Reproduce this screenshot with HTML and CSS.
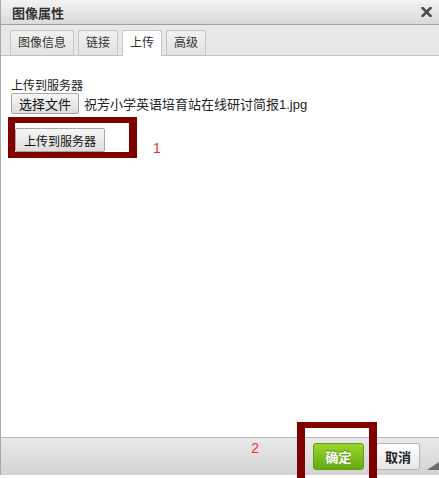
FILE: index.html
```html
<!DOCTYPE html>
<html lang="zh-CN">

<head>
    <meta charset="UTF-8">
    <meta name="viewport" content="width=device-width, initial-scale=1.0">
    <title>图像属性</title>
    <link rel="stylesheet" href="styles.css">
</head>

<body>
    <div class="dialog">
        <!-- 标题栏 -->
        <div class="title-bar">
            <span class="title">图像属性</span>
            <span class="close">
                <svg width="11" height="10" viewBox="0 0 11 10">
                    <path d="M1.5 1 L9.5 9 M9.5 1 L1.5 9" stroke="#4d4d4d" stroke-width="2.6" stroke-linecap="square" />
                </svg>
            </span>
        </div>

        <!-- 탭 -->
        <div class="tabs">
            <div class="tab">图像信息</div>
            <div class="tab">链接</div>
            <div class="tab active">上传</div>
            <div class="tab">高级</div>
        </div>

        <div class="content">
            <div class="field-label">上传到服务器</div>
            <div class="file-row">
                <button class="btn">选择文件</button>
                <span class="file-name">祝芳小学英语培育站在线研讨简报1.jpg</span>
            </div>
            <div class="upload-row">
                <div class="mark mark-upload">
                    <button class="btn btn-upload">上传到服务器</button>
                </div>
                <span class="mark-num">1</span>
            </div>
        </div>

        <div class="footer">
            <span class="mark-num num-2">2</span>
            <button class="btn-ok">确定</button>
            <button class="btn-cancel">取消</button>
            <span class="grip"></span>
        </div>

        <!-- 확인 버튼 표시 -->
        <div class="mark mark-ok"></div>
    </div>
    <div class="page-text">图片上传后点击确定按钮插入到文章中</div>
</body>

</html>
```

FILE: styles.css
```css
html,
body {
    margin: 0;
    padding: 0;
    height: 478px;
    overflow: hidden;
    background: white;
    font-family: "Liberation Sans", "Noto Sans CJK SC", sans-serif;
    color: #222;
}

.dialog {
    position: relative;
    border-left: 1px solid #a8a8a8;
}

.title-bar {
    height: 24px;
    display: flex;
    align-items: center;
    justify-content: space-between;
    padding: 0 7px 0 11px;
    background: linear-gradient(#f3f3f3, #dadada);
    border-bottom: 1px solid #a0a0a0;
}

.title {
    font-size: 13px;
    font-weight: bold;
    color: #333;
}

.close {
    display: flex;
    margin-top: -1px;
}

.tabs {
    height: 30px;
    display: flex;
    align-items: flex-end;
    gap: 4px;
    padding-left: 9px;
    background: #e8e8e8;
    border-bottom: 1px solid #c2c2c2;
}

.tab {
    height: 24px;
    line-height: 24px;
    padding: 0 7px;
    font-size: 12px;
    color: #333;
    background: linear-gradient(#f2f2f2, #e2e2e2);
    border: 1px solid #c6c6c6;
    border-bottom: none;
    border-radius: 3px 3px 0 0;
}

.tab.active {
    background: white;
    margin-bottom: -1px;
    height: 25px;
}

.content {
    height: 381px;
    box-sizing: border-box;
    padding: 23px 0 0 10px;
    background: white;
}

.field-label {
    font-size: 12px;
    line-height: 14px;
}

.file-row {
    display: flex;
    align-items: center;
    gap: 5px;
    font-size: 13px;
}

.btn {
    height: 21px;
    padding: 0 7px;
    font-family: inherit;
    font-size: 13px;
    color: #111;
    background: linear-gradient(#f6f6f6, #dddddd);
    border: 1px solid #a6a6a6;
    border-radius: 2px;
}

.upload-row {
    display: flex;
    margin-top: 3px;
    margin-left: -3px;
}

.mark {
    box-sizing: border-box;
    border: 7px solid #800000;
    border-top-width: 6px;
    border-right-width: 8px;
    border-bottom-width: 6px;
}

.mark-upload {
    width: 129px;
    height: 41px;
    padding-top: 5px;
}

.btn-upload {
    width: 90px;
    height: 24px;
    font-size: 12px;
    display: block;
}

.mark-num {
    font-size: 14px;
    line-height: 16px;
    color: #ff2a2a;
}

.upload-row .mark-num {
    align-self: flex-end;
    margin: 0 0 2px 16px;
}

.footer {
    height: 38px;
    box-sizing: border-box;
    display: flex;
    justify-content: flex-end;
    align-items: flex-start;
    padding-top: 5px;
    background: linear-gradient(#e9e9e9, #d3d3d3);
    border-top: 1px solid #b8b8b8;
}

.num-2 {
    margin: -3px 54px 0 0;
}

.btn-ok {
    width: 51px;
    height: 27px;
    font-family: inherit;
    font-size: 13px;
    font-weight: bold;
    color: white;
    text-shadow: 0 -1px 0 #4f8a0c;
    background: linear-gradient(#9ad628, #66aa13);
    border: 1px solid #62a012;
    border-radius: 3px;
}

.btn-cancel {
    width: 44px;
    height: 27px;
    margin-left: 12px;
    font-family: inherit;
    font-size: 13px;
    font-weight: bold;
    color: #222;
    background: linear-gradient(#ffffff, #e6e6e6);
    border: 1px solid #b4b4b4;
    border-radius: 3px;
}

.grip {
    align-self: flex-end;
    width: 0;
    height: 0;
    margin: 0 0 5px 7px;
    border-left: 12px solid transparent;
    border-bottom: 8px solid #6a6a6a;
}

.mark-ok {
    position: absolute;
    left: 296px;
    top: 422px;
    width: 80px;
    height: 60px;
    border-width: 6px 8px 0 8px;
}

.page-text {
    font-size: 13px;
    line-height: 13px;
    color: #444;
    padding: 3px 0 0 2px;
}
```
